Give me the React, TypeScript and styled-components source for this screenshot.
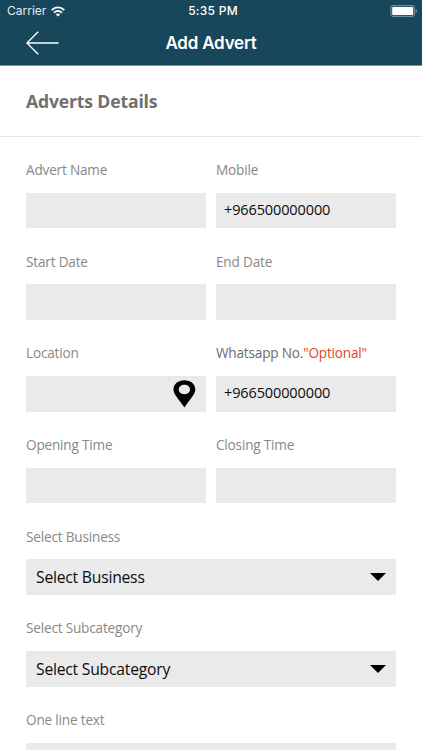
import React from 'react';
import styled, { createGlobalStyle } from 'styled-components';

const GlobalStyle = createGlobalStyle`
  * { box-sizing: border-box; }
  body { margin: 0; background: #fff; }
`;

const Screen = styled.main`
  width: 422px;
  height: 750px;
  overflow: hidden;
  background: #fff;
  font-family: 'Open Sans', 'Noto Sans', sans-serif;
`;

const Header = styled.header`
  height: 66px;
  background: #18465b;
  border-bottom: 1px solid #7996a2;
  color: #fff;
  font-family: Inter, 'Liberation Sans', sans-serif;
`;

const StatusBar = styled.div`
  display: grid;
  grid-template-columns: 1fr auto 1fr;
  align-items: center;
  height: 22px;
  padding: 0 4px 0 7px;
  font-size: 12px;
  line-height: 22px;
`;

const Carrier = styled.div`
  display: flex;
  align-items: center;
  gap: 5px;
  color: #e6edf0;
`;

const Clock = styled.div`
  font-weight: 500;
  letter-spacing: 0.27px;
  margin-right: -1px;
`;

const Battery = styled.svg`
  justify-self: end;
`;

const NavBar = styled.nav`
  display: grid;
  grid-template-columns: 1fr auto 1fr;
  align-items: center;
  height: 42px;
  padding: 0 26px;
`;

const BackButton = styled.button`
  display: flex;
  justify-self: start;
  padding: 0;
  border: 0;
  background: none;
`;

const NavTitle = styled.h1`
  margin: 0;
  font-size: 17px;
  font-weight: 600;
  letter-spacing: -0.2px;
  line-height: 22px;
`;

const SectionTitle = styled.h2`
  height: 71px;
  margin: 0;
  padding: 0 26px;
  border-bottom: 1px solid #e6e6e6;
  color: #707070;
  font-size: 17.6px;
  font-weight: 700;
  letter-spacing: -0.16px;
  line-height: 70px;
`;

const Form = styled.form`
  display: grid;
  grid-template-columns: 180px 180px;
  grid-auto-rows: 91.64px;
  column-gap: 10px;
  padding: 23px 26px 0;
`;

const Field = styled.div<{ $wide?: boolean }>`
  grid-column: ${({ $wide }) => ($wide ? '1 / -1' : 'auto')};
`;

const Label = styled.div<{ $dark?: boolean }>`
  height: 32.8px;
  color: ${({ $dark }) => ($dark ? '#6c6c6c' : '#888')};
  font-size: 13.6px;
  letter-spacing: -0.19px;
  line-height: 20.6px;
  white-space: nowrap;
`;

const Optional = styled.span`
  color: #dc4630;
`;

const Box = styled.div<{ $select?: boolean }>`
  display: flex;
  align-items: center;
  justify-content: space-between;
  height: 35.6px;
  padding: ${({ $select }) => ($select ? '0 10px' : '0 10px 0 8px')};
  background: #eaeaea;
  color: #0c0c0c;
  font-size: ${({ $select }) => ($select ? '15.7px' : '14.5px')};
  letter-spacing: ${({ $select }) => ($select ? '-0.22px' : '-0.12px')};
  white-space: nowrap;
`;

const Value = styled.span<{ $select?: boolean }>`
  line-height: 20px;
  margin-bottom: ${({ $select }) => ($select ? '0' : '1.4px')};
`;

const WifiIcon = () => (
  <svg width="14" height="11" viewBox="0 0 14 11" fill="none" stroke="#fff" strokeWidth="1.9">
    <path d="M.7 4.1C4.3.5 9.7.5 13.3 4.1" />
    <path d="M3 6.6c2.3-2.2 5.7-2.2 8 0" />
    <path d="M7 10.6 4.8 8.4c1.3-1.2 3.1-1.2 4.4 0Z" fill="#fff" stroke="none" />
  </svg>
);

const BatteryIcon = () => (
  <Battery width="28" height="12" viewBox="0 0 28 12">
    <rect x=".9" y=".6" width="23.6" height="10.8" rx="2.6" fill="none" stroke="#6f8d9a" strokeWidth="1.1" />
    <rect x="2.2" y="2" width="21" height="8" rx="1" fill="#fff" />
    <path d="M25.7 4.1c1.7.5 1.7 3.3 0 3.8Z" fill="#849ca7" />
  </Battery>
);

const BackIcon = () => (
  <svg width="33" height="24" viewBox="0 0 33 24" fill="none" stroke="#fff" strokeWidth="1.4">
    <path d="M12.2.8.9 12l11.3 11.2M.9 12h31.7" />
  </svg>
);

const PinIcon = () => (
  <svg width="23" height="28" viewBox="0 0 23 28">
    <path
      fill="#000"
      fillRule="evenodd"
      d="M11.4.3C5.1.3.5 4.2.5 9.4c0 4.9 4.2 8 10.9 18 6.7-10 10.9-13.1 10.9-18C22.3 4.2 17.7.3 11.4.3Zm0 4.5c3.3 0 5.6 2.1 5.6 4.7s-2.3 4.7-5.6 4.7-5.6-2.1-5.6-4.7 2.3-4.7 5.6-4.7Z"
    />
  </svg>
);

const CaretIcon = () => (
  <svg width="16" height="8" viewBox="0 0 16 8">
    <path d="M0 0h16L8 8Z" fill="#000" />
  </svg>
);

type FieldSpec = {
  label: string;
  value?: string;
  optional?: boolean;
  select?: boolean;
  wide?: boolean;
  pin?: boolean;
};

const fields: FieldSpec[] = [
  { label: 'Advert Name' },
  { label: 'Mobile', value: '+966500000000' },
  { label: 'Start Date' },
  { label: 'End Date' },
  { label: 'Location', pin: true },
  { label: 'Whatsapp No.', value: '+966500000000', optional: true },
  { label: 'Opening Time' },
  { label: 'Closing Time' },
  { label: 'Select Business', value: 'Select Business', select: true, wide: true },
  { label: 'Select Subcategory', value: 'Select Subcategory', select: true, wide: true },
  { label: 'One line text', wide: true },
];

export default function App() {
  return (
    <Screen>
      <GlobalStyle />
      <Header>
        <StatusBar>
          <Carrier>
            Carrier
            <WifiIcon />
          </Carrier>
          <Clock>5:35 PM</Clock>
          <BatteryIcon />
        </StatusBar>
        <NavBar>
          <BackButton type="button" aria-label="Back">
            <BackIcon />
          </BackButton>
          <NavTitle>Add Advert</NavTitle>
        </NavBar>
      </Header>
      <SectionTitle>Adverts Details</SectionTitle>
      <Form>
        {fields.map((f) => (
          <Field key={f.label} $wide={f.wide}>
            <Label $dark={f.optional}>
              {f.label}
              {f.optional && <Optional>"Optional"</Optional>}
            </Label>
            <Box $select={f.select}>
              <Value $select={f.select}>{f.value}</Value>
              {f.pin && <PinIcon />}
              {f.select && <CaretIcon />}
            </Box>
          </Field>
        ))}
      </Form>
    </Screen>
  );
}
